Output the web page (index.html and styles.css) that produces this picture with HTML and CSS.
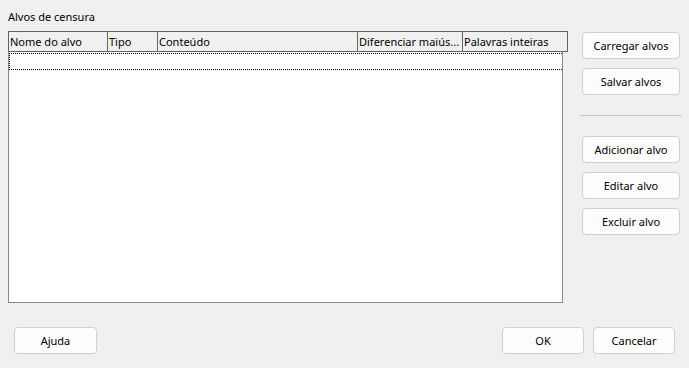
FILE: index.html
```html
<!DOCTYPE html>
<html lang="pt">
<head>
<meta charset="utf-8">
<title>Alvos de censura</title>
<link rel="stylesheet" href="styles.css">
</head>
<body>
<div class="dialog">
  <div class="main">
    <div class="group">
      <div class="group-title">Alvos de censura</div>
      <div class="list">
        <div class="list-header">
          <div class="col col-name">Nome do alvo</div>
          <div class="col col-type">Tipo</div>
          <div class="col col-content">Conteúdo</div>
          <div class="col col-case">Diferenciar maiús...</div>
          <div class="col col-whole">Palavras inteiras</div>
        </div>
        <div class="focus-row"></div>
      </div>
    </div>
    <div class="side">
      <button class="btn btn-side">Carregar alvos</button>
      <button class="btn btn-side">Salvar alvos</button>
      <div class="separator"></div>
      <button class="btn btn-side">Adicionar alvo</button>
      <button class="btn btn-side">Editar alvo</button>
      <button class="btn btn-side">Excluir alvo</button>
    </div>
  </div>
  <div class="footer">
    <button class="btn btn-help">Ajuda</button>
    <div class="footer-right">
      <button class="btn btn-foot">OK</button>
      <button class="btn btn-foot">Cancelar</button>
    </div>
  </div>
</div>
</body>
</html>
```
FILE: styles.css
```css
html, body {
  margin: 0;
  padding: 0;
}
body {
  width: 689px;
  height: 368px;
  background: #f0f0f0;
  font-family: "Noto Sans", "Open Sans", sans-serif;
  font-size: 11px;
  color: #000;
  overflow: hidden;
}
.dialog {
  display: flex;
  flex-direction: column;
  height: 368px;
  box-sizing: border-box;
}
.main {
  display: flex;
  align-items: flex-start;
  padding: 9px 0 0 8px;
}
.group {
  width: 560px;
}
.group-title {
  height: 16px;
  line-height: 16px;
  margin-bottom: 6px;
}
.list {
  width: 555px;
  height: 272px;
  box-sizing: border-box;
  border: 1px solid #828790;
  background: #fff;
}
.list-header {
  display: flex;
  width: 560px;
  height: 21px;
  margin: -1px 0 0 -1px;
  box-sizing: border-box;
  border-top: 1px solid #646464;
  border-bottom: 1px solid #646464;
  border-left: 1px solid #646464;
  background: #f0f0f0;
}
.col {
  box-sizing: border-box;
  border-right: 1px solid #646464;
  padding-left: 1px;
  line-height: 19px;
  white-space: nowrap;
  overflow: hidden;
}
.col-name { width: 99px; }
.col-type { width: 50px; }
.col-content { width: 200px; }
.col-case { width: 105px; }
.col-whole { width: 105px; }
.focus-row {
  height: 17px;
  margin-top: 1px;
  box-sizing: border-box;
  border: 1px dotted #000;
  border-right: none;
}
.side {
  display: flex;
  flex-direction: column;
  margin-left: 14px;
  padding-top: 23px;
  width: 98px;
}
.btn {
  font-family: inherit;
  font-size: 11px;
  color: #000;
  background: #fdfdfd;
  border: 1px solid #d0d0d0;
  border-radius: 4px;
  height: 27px;
  padding: 0;
  box-sizing: border-box;
}
.btn-side {
  width: 98px;
  margin-bottom: 9px;
}
.separator {
  height: 1px;
  background: #c8c8c8;
  margin: 11px -2px 20px -2px;
}
.footer {
  margin-top: auto;
  display: flex;
  justify-content: space-between;
  padding: 0 14px 14px 14px;
}
.btn-help {
  width: 83px;
}
.footer-right {
  display: flex;
  gap: 9px;
}
.btn-foot {
  width: 82px;
}
```
